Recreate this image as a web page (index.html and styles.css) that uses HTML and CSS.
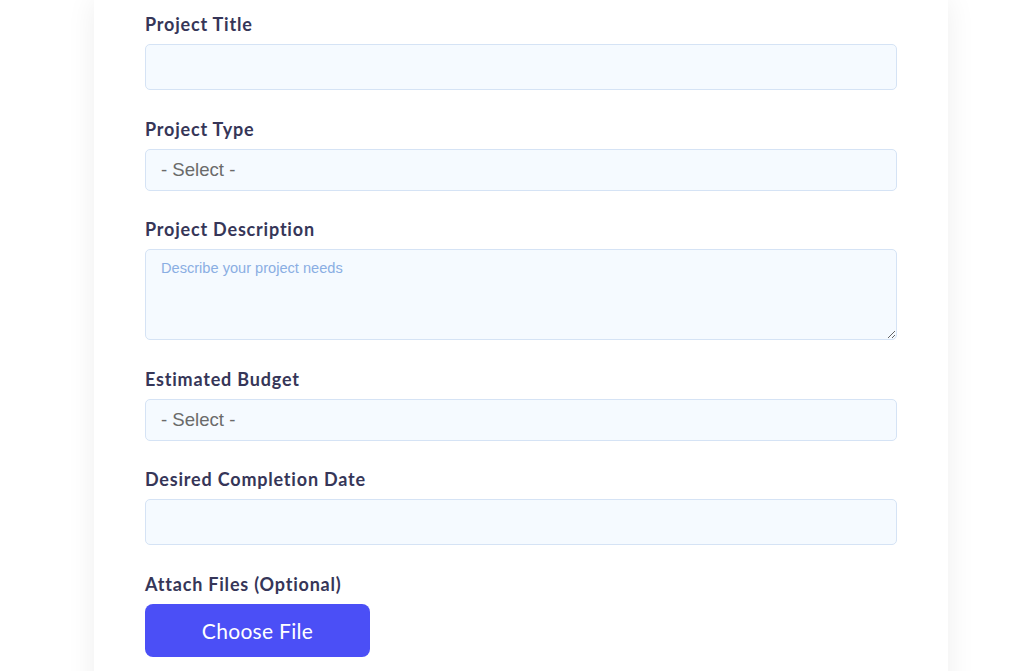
FILE: index.html
```html
<!DOCTYPE html>
<html lang="en">
<head>
<meta charset="utf-8">
<title>Project Form</title>
<link rel="stylesheet" href="styles.css">
</head>
<body>
<div class="page">
  <form class="card">
    <div class="field">
      <label class="label">Project Title</label>
      <input class="control input" type="text">
    </div>
    <div class="field">
      <label class="label">Project Type</label>
      <select class="control select"><option>- Select -</option></select>
    </div>
    <div class="field">
      <label class="label">Project Description</label>
      <textarea class="control textarea" placeholder="Describe your project needs"></textarea>
    </div>
    <div class="field">
      <label class="label">Estimated Budget</label>
      <select class="control select"><option>- Select -</option></select>
    </div>
    <div class="field">
      <label class="label">Desired Completion Date</label>
      <input class="control input" type="text">
    </div>
    <div class="field">
      <label class="label">Attach Files (Optional)</label>
      <button type="button" class="file-btn">Choose File</button>
    </div>
  </form>
</div>
</body>
</html>
```
FILE: styles.css
```css
* { box-sizing: border-box; }
html, body { margin: 0; padding: 0; background: #ffffff; }
body { overflow: hidden; height: 671px; }
.page {
  display: flex;
  padding-left: 94px;
}
.card {
  width: 854px;
  background: #ffffff;
  box-shadow: 0 0 28px rgba(0, 0, 0, 0.07);
  padding: 14px 51px 40px 51px;
  display: flex;
  flex-direction: column;
  gap: 28.6px;
  min-height: 720px;
}
.field {
  display: flex;
  flex-direction: column;
}
.label {
  font-family: "Lato", "Open Sans", sans-serif;
  font-weight: 700;
  font-size: 18px;
  line-height: 20px;
  color: #363658;
  margin-bottom: 10px;
  letter-spacing: 0.8px;
}
.control {
  width: 752px;
  background: #f5faff;
  border: 1px solid #d5e3f5;
  border-radius: 5px;
  font-family: "Liberation Sans", Arial, sans-serif;
  outline: none;
  margin: 0;
}
.input { height: 46px; }
.select {
  height: 42px;
  appearance: none;
  -webkit-appearance: none;
  padding: 0 15px;
  font-size: 18.6px;
  color: #6a6a6a;
}
.textarea {
  height: 91px;
  padding: 9px 15px;
  font-size: 14.6px;
  line-height: 18px;
  color: #333;
  resize: vertical;
  display: block;
}
.textarea::placeholder { color: #8aaee3; }
.file-btn {
  width: 225px;
  height: 53px;
  background: #4b4ff6;
  color: #ffffff;
  border: none;
  border-radius: 8px;
  font-family: "Lato", "Open Sans", sans-serif;
  font-size: 21px;
  font-weight: 400;
  letter-spacing: 0.3px;
  padding: 0;
  cursor: pointer;
}
```
